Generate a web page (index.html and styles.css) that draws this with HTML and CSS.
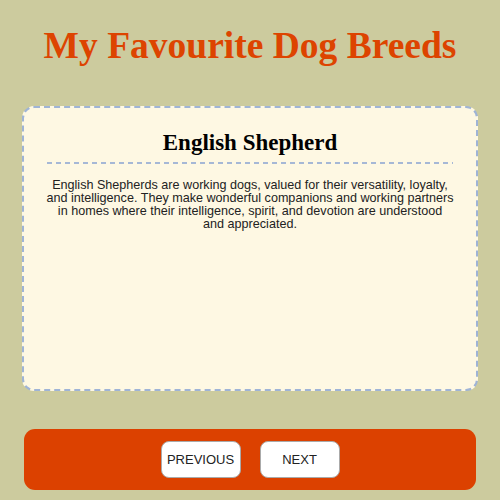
FILE: index.html
```html
<!DOCTYPE html>
<html>
<head>
<meta charset="utf-8">
<link rel="stylesheet" href="styles.css">
</head>
<body>
<h1 class="title">My Favourite Dog Breeds</h1>
<main class="card">
  <h2 class="breed">English Shepherd</h2>
  <p class="desc">English Shepherds are working dogs, valued for their versatility, loyalty, and intelligence. They make wonderful companions and working partners in homes where their intelligence, spirit, and devotion are understood and appreciated.</p>
</main>
<nav class="controls">
  <button class="btn">PREVIOUS</button>
  <button class="btn">NEXT</button>
</nav>
</body>
</html>
```
FILE: styles.css
```css
html, body {
  margin: 0;
  padding: 0;
}
body {
  background: #cccb9e;
  width: 500px;
  height: 500px;
  overflow: hidden;
  display: flex;
  flex-direction: column;
  align-items: center;
}
.title {
  font-family: "Liberation Serif", serif;
  font-weight: bold;
  font-size: 37.5px;
  color: #dd4400;
  margin: 25px 0 0;
  line-height: 42px;
  text-align: center;
}
.card {
  box-sizing: border-box;
  width: 456px;
  height: 285px;
  margin-top: 39px;
  background: #fef8e3;
  border: 2px dashed #9fb4d6;
  border-radius: 12px;
  padding: 0 22px;
}
.breed {
  font-family: "Liberation Serif", serif;
  font-weight: bold;
  font-size: 23px;
  text-align: center;
  margin: 23px 1px 0;
  padding-bottom: 9px;
  line-height: 24px;
  color: #000;
  background-image: repeating-linear-gradient(to right, #a6b8d6 0 5px, transparent 5px 9px);
  background-size: 100% 2px;
  background-position: left bottom;
  background-repeat: no-repeat;
}
.desc {
  font-family: "Liberation Sans", Arial, sans-serif;
  font-size: 12.6px;
  line-height: 13px;
  color: #222;
  text-align: center;
  margin: 15px 0 0;
}
.controls {
  box-sizing: border-box;
  width: 452px;
  height: 61px;
  margin-top: 38px;
  background: #dc4100;
  border-radius: 11px;
  display: flex;
  justify-content: center;
  align-items: center;
  gap: 19px;
}
.btn {
  box-sizing: border-box;
  width: 80px;
  height: 37px;
  background: #fff;
  border: 1px solid #aaa;
  border-radius: 8px;
  font-family: "Liberation Sans", Arial, sans-serif;
  font-size: 13px;
  color: #222;
  padding: 0;
}
```
